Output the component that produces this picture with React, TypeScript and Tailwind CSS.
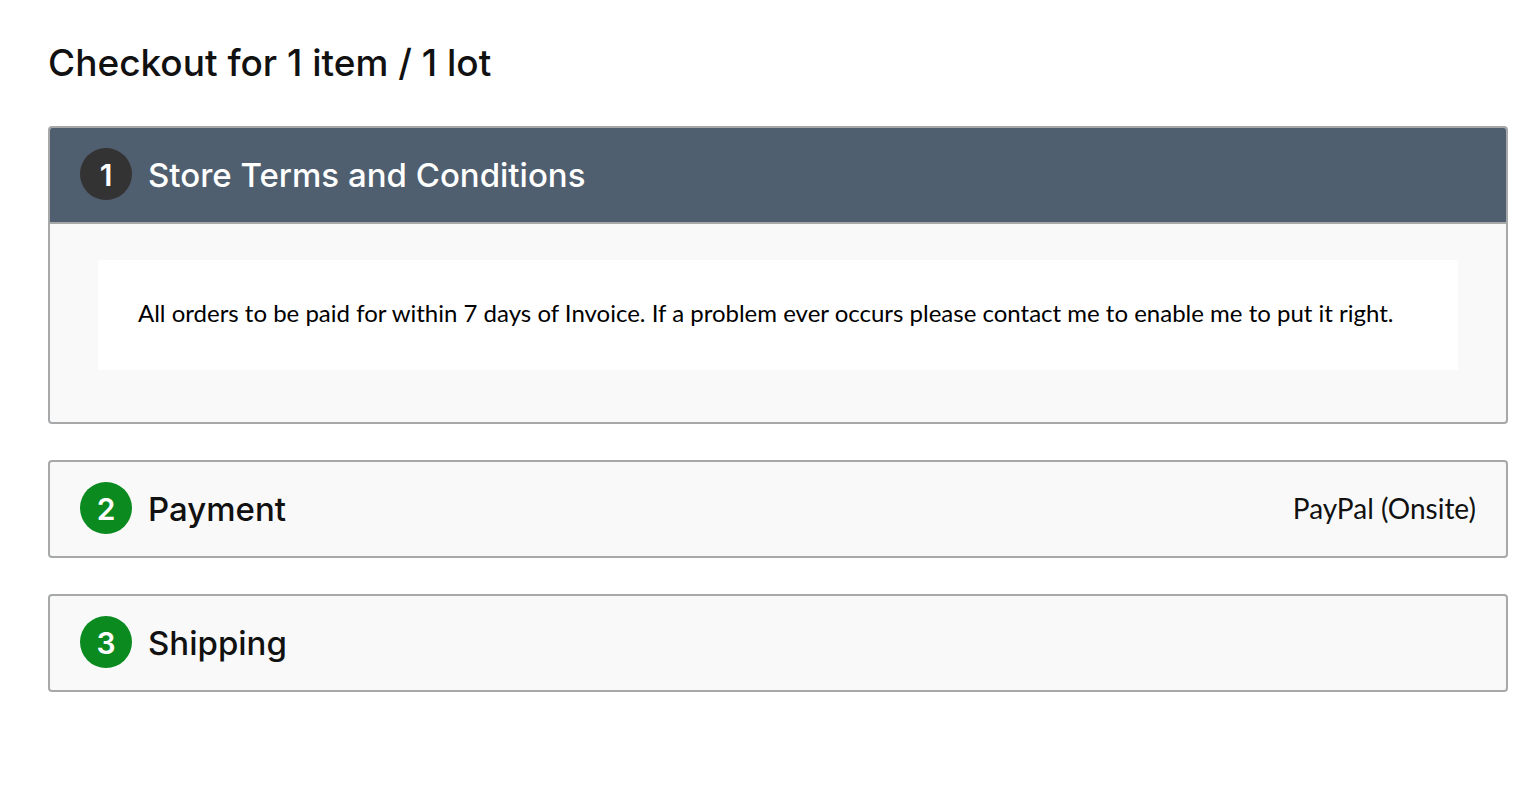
import React from "react";

type StepProps = {
  number: number;
  title: string;
  active?: boolean;
  detail?: string;
  children?: React.ReactNode;
};

function Step({ number, title, active = false, detail, children }: StepProps) {
  return (
    <section className="overflow-hidden rounded-[4px] border-2 border-[#a6a8a9] bg-[#f9f9f9]">
      <header
        className={
          active
            ? "flex items-center gap-4 border-b-2 border-[#a6a8a9] bg-[#505f6f] px-[30px] pt-5 pb-[22px] text-white"
            : "flex items-center gap-4 px-[30px] pt-5 pb-[22px] text-[#111111]"
        }
      >
        <span
          className={
            active
              ? "flex size-[52px] shrink-0 items-center justify-center rounded-full bg-[#333333] pt-0.5 font-['Inter',sans-serif] text-[30px] leading-none font-semibold text-white"
              : "flex size-[52px] shrink-0 items-center justify-center rounded-full bg-[#0a8a1f] pt-0.5 font-['Inter',sans-serif] text-[30px] leading-none font-semibold text-white"
          }
        >
          {number}
        </span>
        <h2 className="pt-0.5 font-['Inter',sans-serif] text-[33px] leading-[50px] font-medium">{title}</h2>
        {detail && <span className="ml-auto text-[28px] leading-[52px]">{detail}</span>}
      </header>
      {children}
    </section>
  );
}

export default function App() {
  return (
    <main className="min-h-screen bg-white pt-9 pr-[30px] pb-12 pl-12 font-['Lato',sans-serif] text-[#111111]">
      <h1 className="font-['Inter',sans-serif] text-[37px] leading-[54px] font-medium">Checkout for 1 item / 1 lot</h1>
      <div className="mt-9 flex flex-col gap-9">
        <Step number={1} title="Store Terms and Conditions" active>
          <div className="px-12 pt-9 pb-[52px]">
            <p className="bg-white px-10 pt-[38px] pb-[42px] text-[24px] leading-[30px] text-black">
              All orders to be paid for within 7 days of Invoice. If a problem ever occurs please contact me to enable me to put it right.
            </p>
          </div>
        </Step>
        <Step number={2} title="Payment" detail="PayPal (Onsite)" />
        <Step number={3} title="Shipping" />
      </div>
    </main>
  );
}
